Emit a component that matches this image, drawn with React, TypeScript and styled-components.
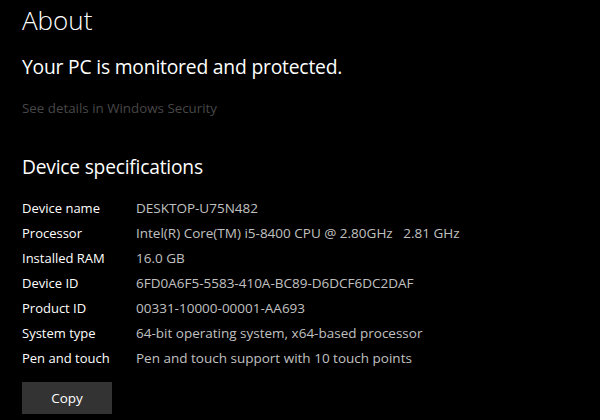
import React from "react";
import styled, { createGlobalStyle } from "styled-components";

const Global = createGlobalStyle`
  html, body { margin: 0; padding: 0; background: #000; }
  body { width: 600px; height: 420px; overflow: hidden; font-family: "Open Sans", "Noto Sans", sans-serif; }
`;

const Page = styled.div`
  width: 600px;
  height: 420px;
  background: #000;
  color: #fff;
  padding: 2px 0 0 22px;
  box-sizing: border-box;
  display: flex;
  flex-direction: column;
`;

const Title = styled.h1`
  margin: 0;
  font-weight: 300;
  font-size: 26px;
  line-height: 36px;
  color: #fff;
`;

const Status = styled.div`
  margin-top: 16px;
  font-size: 19.3px;
  line-height: 26px;
  color: #fff;
  letter-spacing: -0.2px;
`;

const Link = styled.div`
  margin-top: 19px;
  font-size: 13.35px;
  line-height: 18px;
  color: #474747;
`;

const Section = styled.h2`
  margin: 37px 0 0;
  font-weight: 400;
  font-size: 19.2px;
  line-height: 26px;
  color: #fff;
  letter-spacing: -0.2px;
`;

const Specs = styled.div`
  margin-top: 15px;
  display: grid;
  grid-template-columns: 114px auto;
  grid-auto-rows: 25px;
  align-items: center;
  font-size: 13px;
`;

const Label = styled.div`
  color: #fff;
`;

const Value = styled.div`
  color: #c0c0c0;
  font-size: 13.5px;
  white-space: pre;
`;

const CopyButton = styled.button`
  margin-top: 12px;
  width: 90px;
  height: 32px;
  border: none;
  background: #333;
  color: #fff;
  font-family: inherit;
  font-size: 13.5px;
  padding: 0;
`;

const specs: [string, string][] = [
  ["Device name", "DESKTOP-U75N482"],
  ["Processor", "Intel(R) Core(TM) i5-8400 CPU @ 2.80GHz   2.81 GHz"],
  ["Installed RAM", "16.0 GB"],
  ["Device ID", "6FD0A6F5-5583-410A-BC89-D6DCF6DC2DAF"],
  ["Product ID", "00331-10000-00001-AA693"],
  ["System type", "64-bit operating system, x64-based processor"],
  ["Pen and touch", "Pen and touch support with 10 touch points"],
];

export default function App() {
  return (
    <>
      <Global />
      <Page>
        <Title>About</Title>
        <Status>Your PC is monitored and protected.</Status>
        <Link>See details in Windows Security</Link>
        <Section>Device specifications</Section>
        <Specs>
          {specs.map(([k, v]) => (
            <React.Fragment key={k}>
              <Label>{k}</Label>
              <Value>{v}</Value>
            </React.Fragment>
          ))}
        </Specs>
        <div>
          <CopyButton>Copy</CopyButton>
        </div>
      </Page>
    </>
  );
}
